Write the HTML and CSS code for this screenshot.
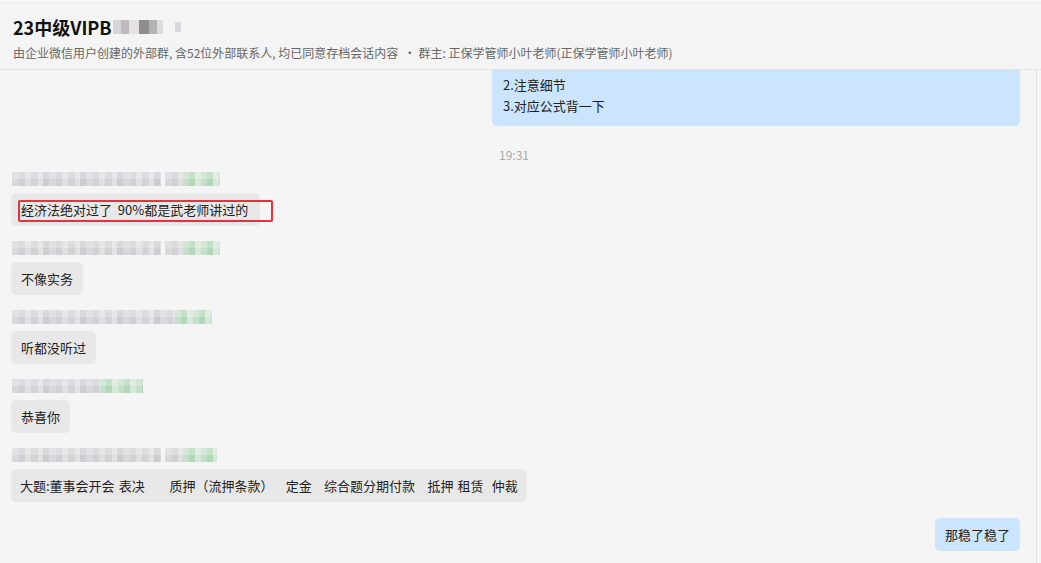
FILE: index.html
```html
<!DOCTYPE html>
<html lang="zh-CN">
<head>
    <meta charset="UTF-8">
    <meta name="viewport" content="width=device-width, initial-scale=1.0">
    <title>23中级VIPB</title>
    <link rel="stylesheet" href="styles.css">
</head>
<body>
    <div class="header">
        <h2 class="title">23中级VIPB<span class="title-blur"></span><span class="title-blur small"></span></h2>
        <p class="subtitle">由企业微信用户创建的外部群, 含52位外部联系人, 均已同意存档会话内容 &nbsp;· 群主: 正保学管师小叶老师(正保学管师小叶老师)</p>
    </div>

    <div class="main">
        <div class="chat">
            <div class="bubble out top-cut">
                <p>2.注意细节</p>
                <p>3.对应公式背一下</p>
            </div>

            <div class="time">19:31</div>

            <div class="msg">
                <div class="name"><span class="blur gray w1"></span><span class="blur gray w-s"></span><span class="blur green"></span></div>
                <div class="bubble in marked">经济法绝对过了&nbsp;&nbsp;90%都是武老师讲过的<span class="mark"></span></div>
            </div>
            <div class="msg">
                <div class="name"><span class="blur gray w1"></span><span class="blur gray w-s"></span><span class="blur green"></span></div>
                <div class="bubble in">不像实务</div>
            </div>
            <div class="msg">
                <div class="name"><span class="blur gray w2"></span><span class="blur green"></span></div>
                <div class="bubble in">听都没听过</div>
            </div>
            <div class="msg">
                <div class="name"><span class="blur gray w3"></span><span class="blur green short"></span></div>
                <div class="bubble in">恭喜你</div>
            </div>
            <div class="msg">
                <div class="name"><span class="blur gray w1"></span><span class="blur gray w-s"></span><span class="blur green narrow"></span></div>
                <div class="bubble in spaced">大题:董事会开会 表决      质押（流押条款）   定金   综合题分期付款   抵押 租赁  仲裁</div>
            </div>

            <div class="bubble out last">那稳了稳了</div>
        </div>
        <div class="rail"></div>
    </div>
</body>
</html>
```

FILE: styles.css
```css
*{
    margin: 0;
    padding: 0;
    box-sizing: border-box;
}
body{
    background-color: #f5f5f5;
    font-family: "Noto Sans CJK SC", "Noto Sans", sans-serif;
    color: #222;
    overflow: hidden;
}
.header{
    height: 70px;
    padding: 14px 12px 0 13px;
    background-color: #f4f4f4;
    border-top: 1px solid #fbfbfb;
    border-bottom: 1px solid #e4e4e4;
}
.title{
    font-size: 18px;
    font-weight: bold;
    line-height: 24px;
    color: #111;
    display: flex;
    align-items: center;
}
.title-blur{
    display: inline-block;
    width: 50px;
    height: 14px;
    margin-left: 1px;
    background: linear-gradient(90deg, #d6d4d6 0 8px, #bdbbbe 8px 16px, #e3e2e4 16px 26px, #8f8d90 26px 36px, #b4b2b5 36px 44px, #dcdbdd 44px);
}
.title-blur.small{
    width: 6px;
    height: 10px;
    margin-left: 12px;
    background: #d9d8da;
}
.subtitle{
    margin-top: 5px;
    font-size: 12px;
    line-height: 18px;
    color: #666;
}
.main{
    display: flex;
    height: 493px;
}
.chat{
    width: 1037px;
    padding: 0 16px 0 11px;
    display: flex;
    flex-direction: column;
    align-items: flex-start;
    border-right: 1px solid #e2e2e2;
    overflow: hidden;
}
.rail{
    flex: 1;
}
.bubble{
    font-size: 13px;
    height: 33px;
    line-height: 33px;
    padding: 0 10px;
    border-radius: 5px;
    white-space: nowrap;
}
.bubble.in{
    background-color: #e8e8e8;
}
.bubble.out{
    background-color: #cae5fd;
    align-self: flex-end;
    margin-top: 15px;
}
.bubble.last{
    margin-top: 16px;
}
.bubble.top-cut{
    height: auto;
    width: 528px;
    margin-top: 0;
    padding: 4px 11px 10px;
    line-height: 21px;
    border-radius: 0 0 5px 5px;
}
.bubble.spaced{
    padding: 0 9px;
    white-space: pre;
    word-spacing: 1.2px;
}
.bubble.marked{
    position: relative;
    width: 249px;
}
.mark{
    position: absolute;
    left: 7px;
    top: 7px;
    width: 255px;
    height: 22px;
    border: 2px solid #e2343a;
    border-radius: 2px;
}
.time{
    margin: 21px 0 0 488px;
    font-size: 12px;
    line-height: 16px;
    color: #a9a9a9;
}
.msg{
    margin-top: 15px;
    display: flex;
    flex-direction: column;
    align-items: flex-start;
}
.time + .msg{
    margin-top: 9px;
}
.name{
    height: 14px;
    margin-bottom: 7px;
    display: flex;
    padding-left: 1px;
}
.blur{
    display: block;
    height: 14px;
    opacity: 0.8;
}
.blur.gray{
    background:
        linear-gradient(180deg, rgba(255,255,255,0.25) 0 7px, rgba(255,255,255,0) 7px),
        repeating-linear-gradient(90deg, #d3d2d5 0 7px, #c9c8cc 7px 13px, #dcdbde 13px 19px, #cbcacd 19px 26px, #dedde0 26px 31px, #c4c3c7 31px 37px);
}
.blur.w1{ width: 149px; }
.blur.w2{ width: 163px; }
.blur.w3{ width: 88px; }
.blur.w-s{
    width: 18px;
    margin-left: 4px;
}
.blur.green{
    width: 37px;
    background:
        linear-gradient(180deg, rgba(255,255,255,0.25) 0 7px, rgba(255,255,255,0) 7px),
        repeating-linear-gradient(90deg, #b9dcc0 0 6px, #a2d1ab 6px 12px, #cfe6d3 12px 18px);
}
.blur.green.short{ width: 43px; }
.blur.green.narrow{ width: 34px; }
```
